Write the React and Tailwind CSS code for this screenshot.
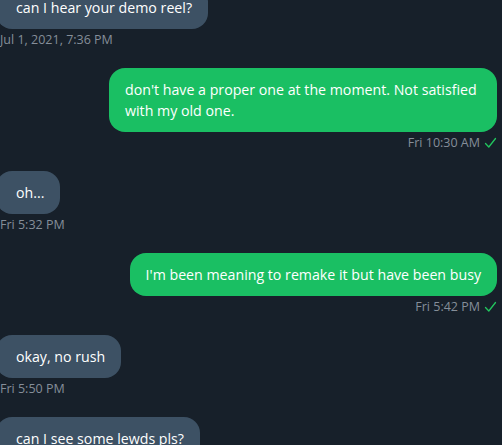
import React from 'react';

const messages = [
  { id: 1, mine: false, text: 'can I hear your demo reel?', time: 'Jul 1, 2021, 7:36 PM' },
  { id: 2, mine: true, text: "don't have a proper one at the moment. Not satisfied with my old one.", time: 'Fri 10:30 AM' },
  { id: 3, mine: false, text: 'oh...', time: 'Fri 5:32 PM' },
  { id: 4, mine: true, text: "I'm been meaning to remake it but have been busy", time: 'Fri 5:42 PM' },
  { id: 5, mine: false, text: 'okay, no rush', time: 'Fri 5:50 PM' },
  { id: 6, mine: false, text: 'can I see some lewds pls?', time: '' },
];

const Tick = () => (
  <svg width="13" height="12" viewBox="0 0 13 12" fill="none" className="ml-1 shrink-0">
    <path d="M1.5 6.5 L4.8 10 L11.5 1.5" stroke="#22c55e" strokeWidth="1.3" strokeLinecap="round" strokeLinejoin="round" />
  </svg>
);

const Message = ({ msg }) => (
  <div className={`flex flex-col ${msg.mine ? 'items-end' : 'items-start'}`}>
    <div
      className={`w-fit max-w-[388px] py-[11px] text-[14.2px] leading-[21px] text-white rounded-2xl ${
        msg.mine ? 'bg-[#1abf63] px-4' : 'bg-[#3d5164] -ml-1 pl-5 pr-4'
      }`}
    >
      {msg.text}
    </div>
    {msg.time && (
      <div className="mt-[3px] flex items-center text-[12.5px] leading-4 text-[#858e99]">
        <span>{msg.time}</span>
        {msg.mine && <Tick />}
      </div>
    )}
  </div>
);

export default function App() {
  return (
    <div className="h-[445px] w-full overflow-hidden bg-[#17202a]" style={{ fontFamily: '"Open Sans", sans-serif' }}>
      <div className="-mt-[14px] flex flex-col gap-5 pr-[5px]">
        {messages.map((m) => (
          <Message key={m.id} msg={m} />
        ))}
      </div>
    </div>
  );
}
